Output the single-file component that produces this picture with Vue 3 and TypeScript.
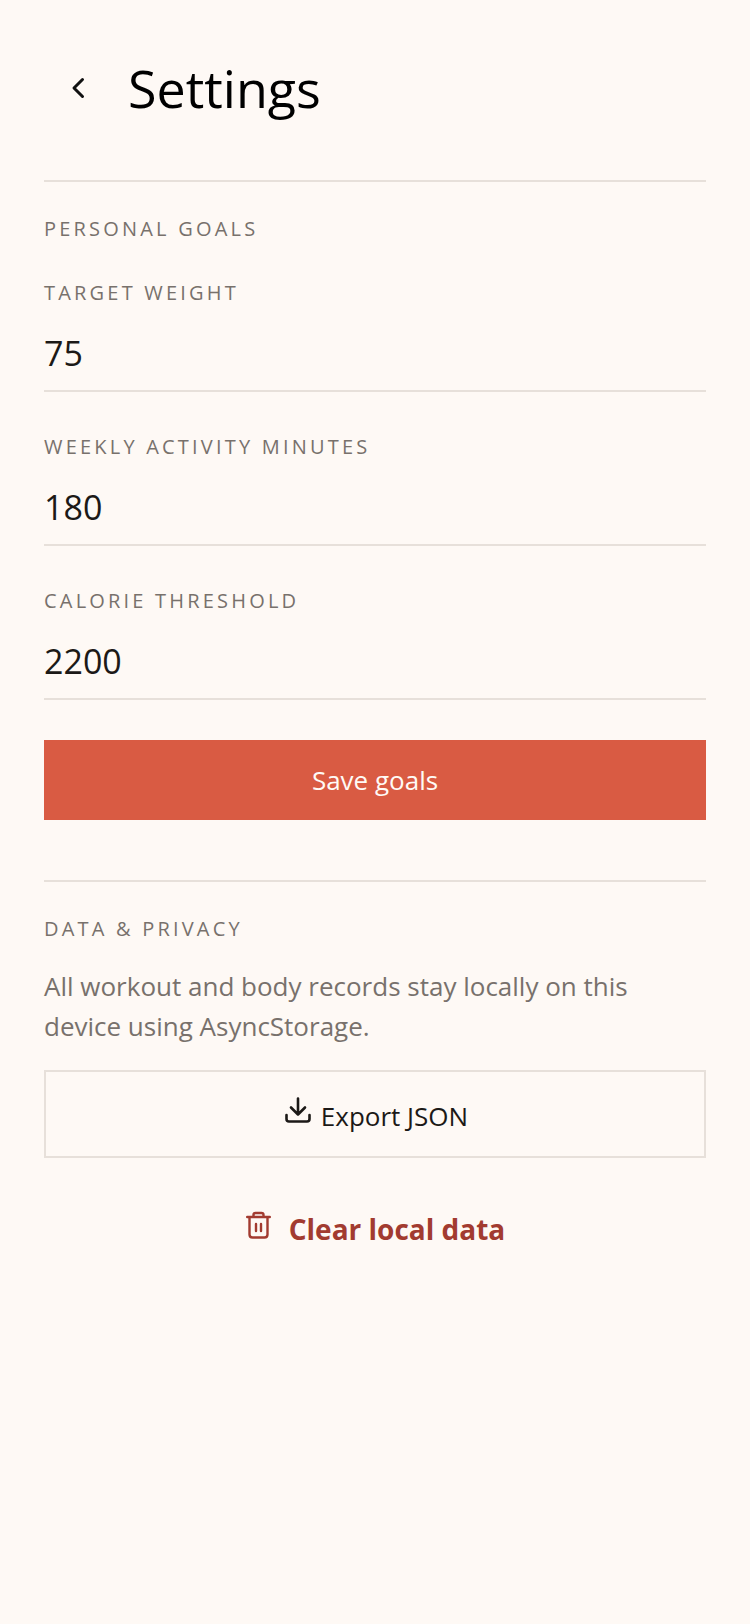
<script setup lang="ts">
const goals = [
  { label: 'Target weight', value: '75' },
  { label: 'Weekly activity minutes', value: '180' },
  { label: 'Calorie threshold', value: '2200' },
]
</script>

<template>
  <div class="page">
    <header class="header">
      <button class="back" aria-label="Back">
        <svg width="32" height="32" viewBox="0 0 32 32" fill="none" stroke="#111" stroke-width="3" stroke-linecap="round" stroke-linejoin="round">
          <path d="M21.5 7.5 L13 16 L21.5 24.5" />
        </svg>
      </button>
      <h1 class="title">Settings</h1>
    </header>

    <section class="section">
      <h2 class="section-title">Personal goals</h2>
      <div v-for="goal in goals" :key="goal.label" class="field">
        <div class="field-label">{{ goal.label }}</div>
        <div class="field-value">{{ goal.value }}</div>
      </div>
      <button class="btn-save">Save goals</button>
    </section>

    <section class="section section-data">
      <h2 class="section-title">Data &amp; privacy</h2>
      <p class="note">All workout and body records stay locally on this device using AsyncStorage.</p>
      <button class="btn-export">
        <svg class="icon-export" width="28" height="28" viewBox="0 0 28 28" fill="none" stroke="#1c1917" stroke-width="2.6" stroke-linecap="round" stroke-linejoin="round">
          <path d="M14 2.5 V18.5 M7 11.5 L14 18.5 L21 11.5 M2.5 19 V23 Q2.5 25.5 5 25.5 H23 Q25.5 25.5 25.5 23 V19" />
        </svg>
        <span class="export-text">Export JSON</span>
      </button>
      <button class="btn-clear">
        <svg class="icon-clear" width="25" height="28" viewBox="0 0 25 28" fill="none" stroke="#a23b30" stroke-width="2.4" stroke-linecap="round" stroke-linejoin="round">
          <path d="M1.2 6 H23.8 M7.5 6 V3.8 Q7.5 2 9.5 2 H15.5 Q17.5 2 17.5 3.8 V6 M3.5 6 V23.5 Q3.5 26.5 6.5 26.5 H18.5 Q21.5 26.5 21.5 23.5 V6 M10 13 V20 M15 13 V20" />
        </svg>
        <span>Clear local data</span>
      </button>
    </section>
  </div>
</template>

<style scoped>
.page {
  min-height: 1624px;
  box-sizing: border-box;
  padding: 0 44px;
  background: #fef9f5;
  font-family: "Open Sans", "Noto Sans", sans-serif;
  color: #1c1917;
}
.header {
  display: flex;
  align-items: center;
  gap: 35px;
  height: 182px;
  box-sizing: border-box;
  padding: 0 0 5px 17px;
  border-bottom: 2px solid #e7e0da;
}
.back {
  display: flex;
  padding: 0;
  width: 32px;
  height: 32px;
  background: none;
  border: none;
}
.title {
  margin: 0;
  font-size: 52px;
  font-weight: 400;
  line-height: 70px;
  color: #000;
}
.section {
  display: flex;
  flex-direction: column;
}
.section-title {
  margin: 33px 0 0;
  font-size: 20px;
  font-weight: 400;
  line-height: 28px;
  letter-spacing: 3.2px;
  text-transform: uppercase;
  color: #78716c;
}
.field {
  display: flex;
  flex-direction: column;
  margin-top: 36px;
  border-bottom: 2px solid #e7e0da;
  height: 113px;
  box-sizing: border-box;
}
.field + .field {
  margin-top: 41px;
}
.field-label {
  font-size: 20px;
  line-height: 28px;
  letter-spacing: 3.2px;
  text-transform: uppercase;
  color: #78716c;
}
.field-value {
  margin-top: 24px;
  font-size: 34px;
  line-height: 44px;
}
.btn-save {
  margin-top: 40px;
  height: 80px;
  background: #d95b43;
  border: none;
  color: #fffaf6;
  font: inherit;
  font-size: 26px;
}
.section-data {
  margin-top: 60px;
  border-top: 2px solid #e7e0da;
}
.note {
  margin: 23px 0 0;
  font-size: 26px;
  line-height: 40px;
  color: #78716c;
}
.btn-export {
  display: flex;
  align-items: center;
  justify-content: center;
  gap: 9px;
  margin-top: 24px;
  padding: 0 0 0 2px;
  height: 88px;
  background: none;
  border: 2px solid #e7e0da;
  font: inherit;
  font-size: 26px;
  color: #1c1917;
}
.icon-export {
  margin-top: -8px;
}
.export-text {
  margin-top: 4px;
}
.btn-clear {
  display: flex;
  align-items: center;
  justify-content: center;
  gap: 18px;
  margin-top: 52px;
  padding: 0 0 0 1px;
  background: none;
  border: none;
  font: inherit;
  font-size: 28px;
  font-weight: 700;
  color: #a23b30;
}
.icon-clear {
  margin-top: -8px;
}
</style>
<style>
html, body {
  background: #fef9f5;
}
</style>
